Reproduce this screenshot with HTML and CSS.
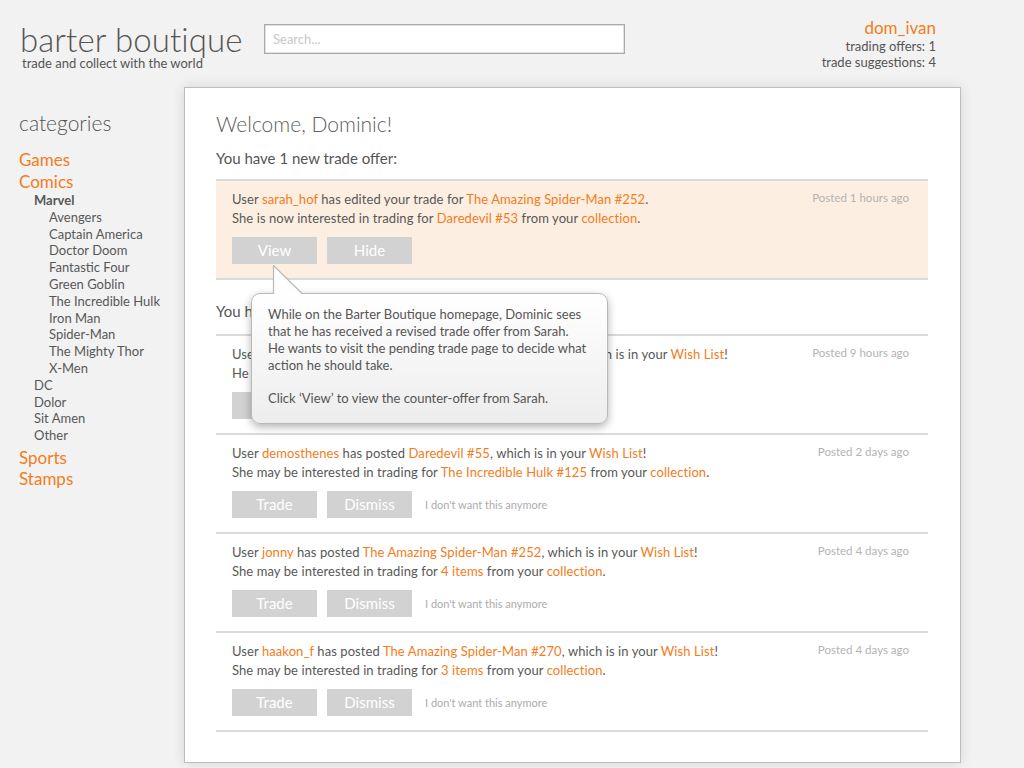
FILE: index.html
```html
<!DOCTYPE html>
<html>
<head>
<meta charset="utf-8">
<link rel="stylesheet" href="styles.css">
</head>
<body>
<header class="top">
  <div class="brand">
    <div class="brand-name">barter boutique</div>
    <div class="brand-tag">trade and collect with the world</div>
  </div>
  <div class="search"><span class="placeholder">Search...</span></div>
  <div class="user">
    <div class="user-name">dom_ivan</div>
    <div class="user-line">trading offers: 1</div>
    <div class="user-line">trade suggestions: 4</div>
  </div>
</header>
<div class="layout">
  <nav class="sidebar">
    <div class="side-title">categories</div>
    <ul class="cats">
      <li class="cat">Games</li>
      <li class="cat">Comics
        <ul class="sub">
          <li class="sub-head">Marvel
            <ul class="subsub">
              <li>Avengers</li>
              <li>Captain America</li>
              <li>Doctor Doom</li>
              <li>Fantastic Four</li>
              <li>Green Goblin</li>
              <li>The Incredible Hulk</li>
              <li>Iron Man</li>
              <li>Spider-Man</li>
              <li>The Mighty Thor</li>
              <li>X-Men</li>
            </ul>
          </li>
          <li>DC</li>
          <li>Dolor</li>
          <li>Sit Amen</li>
          <li>Other</li>
        </ul>
      </li>
      <li class="cat">Sports</li>
      <li class="cat">Stamps</li>
    </ul>
  </nav>
  <main class="main">
    <h1 class="welcome">Welcome, Dominic!</h1>
    <h2 class="section">You have 1 new trade offer:</h2>
    <div class="item item-hl">
      <div class="item-body">
        <p>User <a>sarah_hof</a> has edited your trade for <a>The Amazing Spider-Man #252</a>.</p>
        <p>She is now interested in trading for <a>Daredevil #53</a> from your <a>collection</a>.</p>
        <div class="actions"><span class="btn">View</span><span class="btn">Hide</span></div>
      </div>
      <div class="posted">Posted 1 hours ago</div>
    </div>
    <h2 class="section section-2">You have 4 new trade suggestions:</h2>
    <div class="list">
      <div class="item">
        <div class="item-body">
          <p>User <a>spidey_fan</a> has posted <a>The Amazing Spider-Man #252</a>, which is in your <a>Wish List</a>!</p>
          <p>He may be interested in trading for <a>2 items</a> from your <a>collection</a>.</p>
          <div class="actions"><span class="btn">Trade</span><span class="btn">Dismiss</span><span class="nope">I don't want this anymore</span></div>
        </div>
        <div class="posted">Posted 9 hours ago</div>
      </div>
      <div class="item">
        <div class="item-body">
          <p>User <a>demosthenes</a> has posted <a>Daredevil #55</a>, which is in your <a>Wish List</a>!</p>
          <p>She may be interested in trading for <a>The Incredible Hulk #125</a> from your <a>collection</a>.</p>
          <div class="actions"><span class="btn">Trade</span><span class="btn">Dismiss</span><span class="nope">I don't want this anymore</span></div>
        </div>
        <div class="posted">Posted 2 days ago</div>
      </div>
      <div class="item">
        <div class="item-body">
          <p>User <a>jonny</a> has posted <a>The Amazing Spider-Man #252</a>, which is in your <a>Wish List</a>!</p>
          <p>She may be interested in trading for <a>4 items</a> from your <a>collection</a>.</p>
          <div class="actions"><span class="btn">Trade</span><span class="btn">Dismiss</span><span class="nope">I don't want this anymore</span></div>
        </div>
        <div class="posted">Posted 4 days ago</div>
      </div>
      <div class="item">
        <div class="item-body">
          <p>User <a>haakon_f</a> has posted <a>The Amazing Spider-Man #270</a>, which is in your <a>Wish List</a>!</p>
          <p>She may be interested in trading for <a>3 items</a> from your <a>collection</a>.</p>
          <div class="actions"><span class="btn">Trade</span><span class="btn">Dismiss</span><span class="nope">I don't want this anymore</span></div>
        </div>
        <div class="posted">Posted 4 days ago</div>
      </div>
    </div>
    <div class="tip">
      <svg class="tip-arrow" width="32" height="30" viewBox="0 0 32 30">
        <polygon points="1.5,0.5 1.5,29 30,29" fill="#fefefe"/>
        <polyline points="1.5,29 1.5,0.5 30,28.5" fill="none" stroke="#b9b9b9" stroke-width="1.2"/>
      </svg>
      <p>While on the Barter Boutique homepage, Dominic sees<br>that he has received a revised trade offer from Sarah.<br>He wants to visit the pending trade page to decide what<br>action he should take.</p>
      <p class="tip-gap">Click ‘View’ to view the counter-offer from Sarah.</p>
    </div>
  </main>
</div>
</body>
</html>
```

FILE: styles.css
```css
* { box-sizing: border-box; }
html, body { margin: 0; padding: 0; }
body {
  background: #f2f2f2;
  font-family: "Lato", "Open Sans", sans-serif;
  color: #585858;
  width: 1024px;
  height: 768px;
  overflow: hidden;
}
p { margin: 0; }
a { color: #f47c20; }
ul { list-style: none; margin: 0; padding: 0; }

.top {
  height: 87px;
  display: flex;
  align-items: flex-start;
  padding: 0 88px 0 20px;
}
.brand { padding-top: 20px; width: 244px; }
.brand-name {
  font-size: 33px;
  line-height: 38px;
  font-weight: 300;
  color: #555;
  letter-spacing: 0.1px;
}
.brand-tag {
  font-size: 13px;
  line-height: 14px;
  margin-top: -2px;
  padding-left: 2px;
  color: #555;
  white-space: nowrap;
}
.search {
  margin-top: 24px;
  width: 361px;
  height: 30px;
  background: #fff;
  border: 1px solid #a9a9b0;
  box-shadow: inset 0 0 0 0.5px #c4c4c8;
  padding: 0 8px;
  display: flex;
  align-items: center;
}
.placeholder { color: #c8c8c8; font-size: 13px; }
.user {
  margin-left: auto;
  text-align: right;
  padding-top: 18px;
}
.user-name { color: #f47c20; font-size: 17px; line-height: 20px; }
.user-line { font-size: 13px; line-height: 16px; color: #555; }

.layout { display: flex; align-items: flex-start; }
.sidebar { width: 184px; padding-left: 19px; padding-top: 23px; }
.side-title { font-size: 21px; line-height: 26px; font-weight: 300; color: #555; margin-bottom: 13px; }
.cat { color: #f47c20; font-size: 17px; line-height: 21.5px; }
.sub { color: #585858; font-size: 13px; line-height: 16.8px; padding-left: 15px; padding-bottom: 3px; }
.sub-head { font-weight: bold; }
.subsub { font-weight: normal; padding-left: 15px; }

.main {
  position: relative;
  width: 777px;
  height: 676px;
  background: #fff;
  border: 1px solid #bdbdbd;
  box-shadow: 0 0 12px rgba(0,0,0,0.12);
  padding: 22px 32px 0 31px;
}
.welcome {
  margin: 0;
  font-weight: 300;
  font-size: 21px;
  line-height: 28px;
  color: #606060;
}
.section {
  margin: 10px 0 11px;
  font-weight: normal;
  font-size: 15px;
  line-height: 20px;
  color: #555;
}
.section-2 { margin: 21px 0 13px; }
.item {
  display: flex;
  justify-content: space-between;
  padding: 9px 19px 14px 16px;
  border-bottom: 2px solid #dadada;
  font-size: 13px;
  letter-spacing: 0.08px;
  line-height: 19px;
}
.item-hl {
  background: #fdeee2;
  border-top: 2px solid #dadada;
}
.list { border-top: 2px solid #dadada; }
.item-body p { white-space: nowrap; }
.actions { display: flex; align-items: center; margin-top: 9px; gap: 10px; }
.btn {
  width: 85px;
  height: 27px;
  background: #d2d2d2;
  color: #fff;
  font-size: 15px;
  letter-spacing: 0;
  display: flex;
  align-items: center;
  justify-content: center;
}
.nope { color: #acacac; font-size: 11px; letter-spacing: 0; margin-left: 3px; }
.posted { color: #b3b3b3; font-size: 11.5px; letter-spacing: 0; line-height: 16px; white-space: nowrap; }

.tip {
  position: absolute;
  left: 66px;
  top: 205px;
  width: 357px;
  height: 131px;
  border: 1px solid #b9b9b9;
  border-radius: 9px;
  background: linear-gradient(#ffffff, #ededed);
  box-shadow: 0 3px 8px rgba(0,0,0,0.3);
  padding: 12px 10px 0 16px;
  font-size: 13px;
  line-height: 17px;
  color: #555;
  white-space: nowrap;
}
.tip-gap { margin-top: 16px; }
.tip-arrow {
  position: absolute;
  left: 20px;
  top: -29px;
}
```
